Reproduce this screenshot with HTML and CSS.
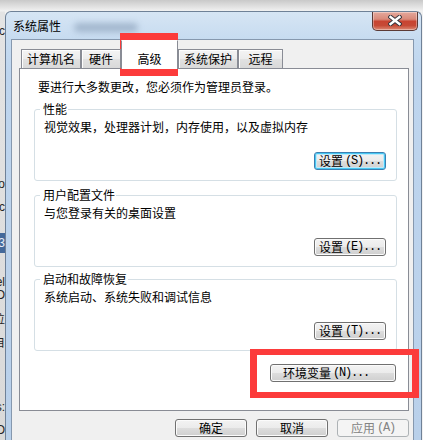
FILE: index.html
```html
<!DOCTYPE html>
<html lang="zh-CN">
<head>
<meta charset="utf-8">
<title>系统属性</title>
<link rel="stylesheet" href="styles.css">
</head>
<body>
<div class="screen">
  <div class="strip">
    <div class="frag m-c"><span>Oc</span></div>
    <div class="frag m-lo"><span>Lo</span></div>
    <div class="frag m-ic"><span>ic</span></div>
    <div class="frag hl"><span>3</span></div>
    <div class="frag m-el"><span>el</span></div>
    <div class="frag m-o"><span>O</span></div>
    <div class="frag m-wei"><span>位</span></div>
    <div class="frag m-zi"><span>自</span></div>
    <div class="frag m-s"><span>s:</span></div>
    <div class="frag m-o2"><span>O</span></div>
  </div>
  <div class="stage">
    <div class="window">
      <div class="titlebar">
        <span class="title">系统属性</span>
        <span class="smudge"></span>
        <button class="close" aria-label="关闭">
          <svg width="14" height="11" viewBox="0 0 14 11">
            <path d="M2.5 2 L11.5 9 M11.5 2 L2.5 9" stroke="#33343c" stroke-width="4.4" stroke-linecap="square" fill="none"/>
            <path d="M2.5 2 L11.5 9 M11.5 2 L2.5 9" stroke="#ffffff" stroke-width="2.4" stroke-linecap="square" fill="none"/>
          </svg>
        </button>
      </div>
      <div class="client">
        <div class="tabs">
          <div class="tab t1">计算机名</div>
          <div class="tab t2">硬件</div>
          <div class="tab selected">高级</div>
          <div class="tab t4">系统保护</div>
          <div class="tab t5">远程</div>
        </div>
        <div class="panel">
          <p class="note">要进行大多数更改，您必须作为管理员登录。</p>
          <fieldset class="group">
            <legend>性能</legend>
            <p class="desc">视觉效果，处理器计划，内存使用，以及虚拟内存</p>
            <div class="actions"><button class="btn focus">设置<span class="asc">(S)...</span></button></div>
          </fieldset>
          <fieldset class="group">
            <legend>用户配置文件</legend>
            <p class="desc">与您登录有关的桌面设置</p>
            <div class="actions"><button class="btn">设置<span class="asc">(E)...</span></button></div>
          </fieldset>
          <fieldset class="group g3">
            <legend>启动和故障恢复</legend>
            <p class="desc">系统启动、系统失败和调试信息</p>
            <div class="actions"><button class="btn">设置<span class="asc">(T)...</span></button></div>
          </fieldset>
          <div class="env-row"><button class="btn env">环境变量<span class="asc">(N)...</span></button></div>
        </div>
        <div class="footer">
          <button class="btn">确定</button>
          <button class="btn">取消</button>
          <button class="btn disabled">应用<span class="asc">(A)</span></button>
        </div>
      </div>
    </div>
  </div>
  <div class="mark mark-tab"></div>
  <div class="mark mark-env"></div>
</div>
</body>
</html>
```

FILE: styles.css
```css
* { box-sizing: border-box; }
html, body { margin: 0; padding: 0; }
body {
  width: 423px;
  height: 440px;
  overflow: hidden;
  background: linear-gradient(#c9c9c9, #f1f1f1 11px, #f1f1f1);
  font-family: "Noto Sans CJK SC", "Microsoft YaHei", sans-serif;
  font-size: 12px;
  color: #000;
}
.screen {
  position: relative;
  display: flex;
  width: 423px;
  height: 440px;
}

/* background window strip on the left */
.strip {
  width: 5px;
  flex: none;
  overflow: hidden;
  padding-top: 11px;
  display: flex;
  flex-direction: column;
  background: linear-gradient(#c9c9c9, #f1f1f1 11px, #e4e4e4 12px, #d9d9d9);
}
.frag {
  display: flex;
  justify-content: flex-end;
  height: 16px;
  line-height: 16px;
  white-space: nowrap;
  font-family: "Liberation Sans", sans-serif;
  font-size: 12px;
  color: #262626;
  flex: none;
}
.m-c { margin-top: 12px; }
.m-lo { margin-top: 137px; }
.m-ic { margin-top: 7px; }
.hl { margin-top: 18px; height: 20px; line-height: 20px; background: #44699a; color: #e8eef6; }
.m-el { margin-top: 21px; }
.m-o { margin-top: -3px; }
.m-wei { margin-top: 9px; }
.m-zi { margin-top: 7px; }
.m-s { margin-top: 48px; }
.m-o2 { margin-top: 7px; }

/* dialog window */
.stage {
  flex: none;
  width: 418px;
  padding-top: 11px;
}
.window {
  width: 417px;
  height: 429px;
  border: 1px solid #6f8197;
  border-bottom: none;
  border-radius: 6px 6px 0 0;
  background: linear-gradient(to bottom, #d6e5f4, #c6dbf0 28px, #bed5ee 60px, #b9d0ea);
  display: flex;
  flex-direction: column;
  padding-left: 5px;
}
.titlebar {
  height: 27px;
  flex: none;
  display: flex;
  align-items: flex-start;
}
.title {
  margin: 6px 0 0 2px;
  line-height: 16px;
  color: #000;
}
.smudge {
  width: 64px;
  height: 9px;
  margin: 11px 0 0 13px;
  background: #94a9c1;
  border-radius: 5px;
  filter: blur(3px);
  opacity: 0.75;
}
.close {
  margin-left: auto;
  margin-right: 3px;
  width: 46px;
  height: 19px;
  padding: 0 0 2px;
  border: 1px solid #5b3a36;
  border-top: none;
  border-radius: 0 0 5px 5px;
  background: linear-gradient(#e4a89c, #d98a7a 40%, #c84431 52%, #c64a36 75%, #dd8a74);
  box-shadow: inset 0 0 0 1px rgba(255, 255, 255, 0.35);
  display: flex;
  align-items: center;
  justify-content: center;
}

.client {
  width: 403px;
  flex: 1;
  border: 1px solid #8698ae;
  border-bottom: none;
  background: #f0f0f0;
  display: flex;
  flex-direction: column;
  padding: 0 4px 0 7px;
}

/* tabs */
.tabs {
  display: flex;
  align-items: flex-end;
  height: 29px;
  flex: none;
  padding-left: 2px;
  margin-bottom: -1px;
  position: relative;
  z-index: 1;
}
.tab {
  height: 19px;
  margin-bottom: 1px;
  border: 1px solid #898c95;
  border-bottom: none;
  background: linear-gradient(#f4f4f4, #ececec 50%, #e1e1e1 51%, #d9d9d9);
  box-shadow: inset 1px 1px 0 #fdfdfd;
  line-height: 18px;
  text-align: center;
  white-space: nowrap;
}
.t1 { width: 60px; }
.t2 { width: 40px; }
.t4 { width: 60px; }
.t5 { width: 45px; }
.tab.selected {
  width: 57px;
  height: 29px;
  margin-bottom: 0;
  background: #fff;
  border-top-color: #fff;
  box-shadow: none;
  padding-top: 9px;
  line-height: 18px;
}

/* panel */
.panel {
  height: 343px;
  flex: none;
  border: 1px solid #898c95;
  background: #fff;
  padding: 10px 11px 0 14px;
  display: flex;
  flex-direction: column;
}
.note {
  margin: 0 0 0 4px;
  line-height: 16px;
}
.group {
  margin: 6px 0 0;
  padding: 2px 10px 10px 9px;
  min-width: 0;
  border: 1px solid #d5dfe5;
  border-radius: 3px;
}
.group.g3 { margin-top: 4px; }
.group legend {
  margin-left: -4px;
  padding: 0 1px 0 3px;
  line-height: 16px;
}
.desc {
  margin: 0;
  line-height: 16px;
}
.actions {
  display: flex;
  justify-content: flex-end;
  margin-top: 17px;
}
.env-row {
  display: flex;
  justify-content: flex-end;
  margin: 13px 1px 0 0;
}

/* buttons */
.btn {
  width: 72px;
  height: 18px;
  padding: 0;
  border: 1px solid #707070;
  border-radius: 3px;
  background: linear-gradient(#f3f3f3, #ebebeb 50%, #dddddd 51%, #cfcfcf);
  box-shadow: inset 0 0 0 1px #fbfbfb;
  font-family: "Noto Sans CJK SC", sans-serif;
  font-size: 12px;
  line-height: 16px;
  color: #000;
  display: flex;
  align-items: center;
  justify-content: center;
  white-space: nowrap;
}
.btn.focus {
  border-color: #3c7fb1;
  box-shadow: inset 0 0 0 1px #48c8f3, inset 0 0 0 2px #bfe9fa;
}
.btn.env {
  width: 126px;
  padding-right: 14px;
}
.btn.disabled {
  border-color: #adb2b5;
  background: #f4f4f4;
  box-shadow: none;
  color: #838383;
}
.asc {
  font-family: "Liberation Mono", monospace;
  font-size: 12px;
  letter-spacing: -1.2px;
  margin-left: 2px;
}
.footer {
  display: flex;
  justify-content: flex-end;
  gap: 9px;
  margin-top: 8px;
}

/* annotation boxes */
.mark {
  position: absolute;
  border: 7px solid #fc3b3b;
  pointer-events: none;
}
.mark-tab {
  left: 120px;
  top: 33px;
  width: 58px;
  height: 43px;
}
.mark-env {
  left: 250px;
  top: 349px;
  width: 169px;
  height: 49px;
  border-width: 6px 7px;
}
```
